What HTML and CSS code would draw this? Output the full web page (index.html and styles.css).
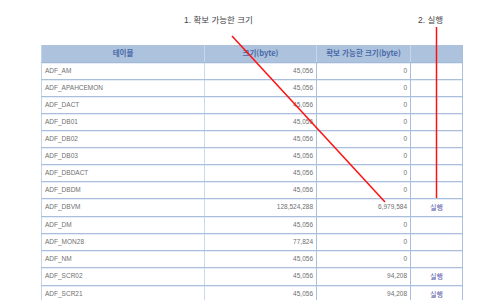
FILE: index.html
```html
<!DOCTYPE html>
<html lang="ko">
<head>
<meta charset="utf-8">
<link rel="stylesheet" href="styles.css">
</head>
<body>
<div class="page">
  <div class="labels">
    <span class="label label-size">1. 확보 가능한 크기</span>
    <span class="label label-run">2. 실행</span>
  </div>
  <table class="grid">
    <colgroup>
      <col class="c-name"><col class="c-size"><col class="c-free"><col class="c-run">
    </colgroup>
    <thead>
      <tr><th>테이블</th><th>크기(byte)</th><th>확보 가능한 크기(byte)</th><th></th></tr>
    </thead>
    <tbody>
      <tr><td>ADF_AM</td><td class="num">45,056</td><td class="num">0</td><td></td></tr>
      <tr><td>ADF_APAHCEMON</td><td class="num">45,056</td><td class="num">0</td><td></td></tr>
      <tr><td>ADF_DACT</td><td class="num">45,056</td><td class="num">0</td><td></td></tr>
      <tr><td>ADF_DB01</td><td class="num">45,056</td><td class="num">0</td><td></td></tr>
      <tr><td>ADF_DB02</td><td class="num">45,056</td><td class="num">0</td><td></td></tr>
      <tr><td>ADF_DB03</td><td class="num">45,056</td><td class="num">0</td><td></td></tr>
      <tr><td>ADF_DBDACT</td><td class="num">45,056</td><td class="num">0</td><td></td></tr>
      <tr><td>ADF_DBDM</td><td class="num">45,056</td><td class="num">0</td><td></td></tr>
      <tr><td>ADF_DBVM</td><td class="num">128,524,288</td><td class="num">6,979,584</td><td class="run"><a href="#">실행</a></td></tr>
      <tr><td>ADF_DM</td><td class="num">45,056</td><td class="num">0</td><td></td></tr>
      <tr><td>ADF_MON28</td><td class="num">77,824</td><td class="num">0</td><td></td></tr>
      <tr><td>ADF_NM</td><td class="num">45,056</td><td class="num">0</td><td></td></tr>
      <tr><td>ADF_SCR02</td><td class="num">45,056</td><td class="num">94,208</td><td class="run"><a href="#">실행</a></td></tr>
      <tr><td>ADF_SCR21</td><td class="num">45,056</td><td class="num">94,208</td><td class="run"><a href="#">실행</a></td></tr>
    </tbody>
  </table>
  <svg class="marks" width="500" height="300" viewBox="0 0 500 300">
    <line x1="232" y1="36" x2="385" y2="202" stroke="#ff1010" stroke-width="1.5"/>
    <line x1="436.5" y1="27" x2="436.5" y2="198" stroke="#ff1010" stroke-width="1.5"/>
  </svg>
</div>
</body>
</html>
```

FILE: styles.css
```css
html, body {
  margin: 0;
  padding: 0;
  background: #ffffff;
  overflow: hidden;
}
.page {
  position: relative;
  width: 500px;
  height: 300px;
  overflow: hidden;
  font-family: "Liberation Sans", "Noto Sans CJK KR", sans-serif;
}
.labels {
  height: 45px;
  display: flex;
  align-items: flex-start;
  padding-top: 13px;
  box-sizing: border-box;
  padding-left: 184px;
}
.label {
  font-family: "Liberation Sans", "Noto Sans CJK KR", sans-serif;
  font-size: 8.5px;
  line-height: 14px;
  color: #444444;
  white-space: nowrap;
}
.label-size {
  flex: 0 0 234px;
}
.grid {
  margin-left: 41px;
  width: 421px;
  border-collapse: collapse;
  table-layout: fixed;
  border-left: 1px solid #c3d3e8;
  border-right: 1px solid #a9bfdc;
}
.c-name { width: 163px; }
.c-size { width: 112px; }
.c-free { width: 94px; }
.c-run { width: 52px; }
.grid th {
  height: 17px;
  padding: 0;
  box-sizing: border-box;
  background: #adc2dc;
  color: #4a6aa8;
  font-family: "Noto Sans CJK KR", sans-serif;
  font-weight: bold;
  font-size: 7.5px;
  line-height: 16px;
  text-align: center;
  border-left: 1px solid #c6d5e9;
  border-bottom: 1px solid #a3b9d8;
}
.grid th:first-child { border-left: none; }
.grid td {
  height: 17px;
  padding: 0 3px;
  box-sizing: border-box;
  font-size: 6.5px;
  line-height: 16px;
  color: #707070;
  border-bottom: 1px solid #a9bfdc;
  border-left: 1px solid #a9bfdc;
  white-space: nowrap;
  box-shadow: inset 0 1px 0 #e6edf6;
}
.grid td:first-child { border-left: none; }
.grid td:nth-child(2) { border-left: 1px solid #cbd9ec; }
.grid td.num { text-align: right; padding-right: 3px; }
.grid td.run { text-align: center; }
.grid td.run a {
  color: #5050a8;
  text-decoration: none;
  font-family: "Noto Sans CJK KR", sans-serif;
  font-size: 7px;
}
.marks {
  position: absolute;
  left: 0;
  top: 0;
  pointer-events: none;
}
```
